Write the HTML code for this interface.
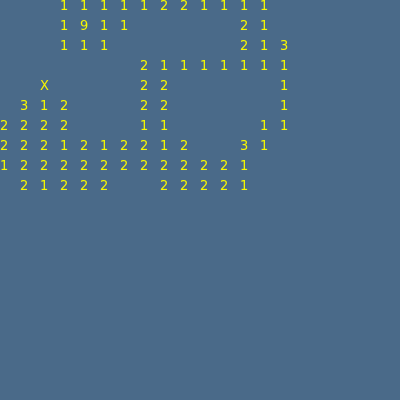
<!DOCTYPE html>
<html><head><style>
html,body{margin:0;padding:0;}
body{width:400px;height:400px;background:#4a6a89;position:relative;overflow:hidden;font-family:"DejaVu Sans","Liberation Sans",sans-serif;font-size:13px;color:#f8f800;}
span{position:absolute;line-height:14px;}
</style></head><body>
<script>
var rows=[
[[3,"1"],[4,"1"],[5,"1"],[6,"1"],[7,"1"],[8,"2"],[9,"2"],[10,"1"],[11,"1"],[12,"1"],[13,"1"]],
[[3,"1"],[4,"9"],[5,"1"],[6,"1"],[12,"2"],[13,"1"]],
[[3,"1"],[4,"1"],[5,"1"],[12,"2"],[13,"1"],[14,"3"]],
[[7,"2"],[8,"1"],[9,"1"],[10,"1"],[11,"1"],[12,"1"],[13,"1"],[14,"1"]],
[[2,"X"],[7,"2"],[8,"2"],[14,"1"]],
[[1,"3"],[2,"1"],[3,"2"],[7,"2"],[8,"2"],[14,"1"]],
[[0,"2"],[1,"2"],[2,"2"],[3,"2"],[7,"1"],[8,"1"],[13,"1"],[14,"1"]],
[[0,"2"],[1,"2"],[2,"2"],[3,"1"],[4,"2"],[5,"1"],[6,"2"],[7,"2"],[8,"1"],[9,"2"],[12,"3"],[13,"1"]],
[[0,"1"],[1,"2"],[2,"2"],[3,"2"],[4,"2"],[5,"2"],[6,"2"],[7,"2"],[8,"2"],[9,"2"],[10,"2"],[11,"2"],[12,"1"]],
[[1,"2"],[2,"1"],[3,"2"],[4,"2"],[5,"2"],[8,"2"],[9,"2"],[10,"2"],[11,"2"],[12,"1"]]
];
var h="";
rows.forEach(function(r,i){r.forEach(function(c){h+='<span style="left:'+(c[0]*20)+'px;top:'+(i*20)+'px">'+c[1]+'</span>';});});
document.body.innerHTML=h;
</script>
</body></html>
